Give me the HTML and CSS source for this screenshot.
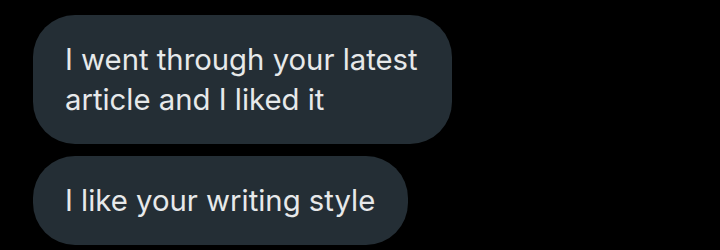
FILE: index.html
```html
<!DOCTYPE html>
<html lang="en">
<head>
  <meta charset="UTF-8">
  <meta name="viewport" content="width=device-width, initial-scale=1.0">
  <title>Messages</title>
  <link rel="stylesheet" href="styles.css">
</head>
<body>
  <div class="thread">
    <div class="bubble">I went through your latest article and I liked it</div>
    <div class="bubble">I like your writing style</div>
  </div>
</body>
</html>
```

FILE: styles.css
```css
body {
  margin: 0;
  background-color: #000;
  font-family: Inter, "Noto Sans", sans-serif;
}
.thread {
  display: flex;
  flex-direction: column;
  align-items: flex-start;
  gap: 12px;
  padding: 15px 0 0 33px;
}
.bubble {
  background-color: #242e35;
  color: #e7e9ea;
  font-size: 29.3px;
  line-height: 40px;
  padding: 25px 33px 24px 32px;
  border-radius: 42px;
  max-width: 354px;
}
```
